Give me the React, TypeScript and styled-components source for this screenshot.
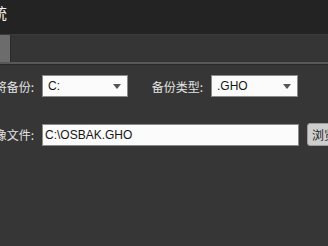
import React from 'react';
import styled, { createGlobalStyle } from 'styled-components';

const GlobalStyle = createGlobalStyle`
  html, body {
    margin: 0;
    padding: 0;
    background: #363636;
    overflow: hidden;
  }
  body {
    font-family: "Liberation Sans", "Noto Sans CJK SC", sans-serif;
  }
`;

const Window = styled.div`
  width: 420px;
  height: 246px;
  margin-left: -26px;
  display: flex;
  flex-direction: column;
  background: #363636;
`;

const TitleBar = styled.div`
  height: 34px;
  background: #232323;
  display: flex;
  align-items: flex-start;
  padding-top: 4px;
  box-sizing: border-box;
  overflow: hidden;
`;

const Title = styled.span`
  margin-left: 3px;
  font-family: "Noto Sans CJK SC", sans-serif;
  font-size: 15px;
  line-height: 18px;
  color: #f2f2f2;
`;

const TabBar = styled.div`
  height: 28px;
  background: #353535;
  border-top: 1px solid #3b3b3b;
  box-sizing: border-box;
  display: flex;
`;

const Tab = styled.div<{ $active?: boolean }>`
  width: 36px;
  background: ${p => (p.$active ? '#6c6c6c' : 'transparent')};
  border-right: 1px solid #2a2a2a;
`;

const TabLine = styled.div`
  height: 2px;
  background: #585858;
  border-bottom: 1px solid #2a2a2a;
`;

const Content = styled.div`
  flex: 1;
  display: flex;
  flex-direction: column;
  gap: 26px;
  padding-top: 10px;
  background: #363636;
`;

const Row = styled.div`
  display: flex;
  align-items: center;
  & > * {
    flex-shrink: 0;
  }
`;

const Label = styled.span<{ $width: number; $gap: number }>`
  width: ${p => p.$width}px;
  margin-right: ${p => p.$gap}px;
  display: flex;
  justify-content: flex-end;
  white-space: nowrap;
  overflow: hidden;
  font-family: "Noto Sans CJK SC", sans-serif;
  font-size: 12px;
  color: #e4e4e4;
`;

const Select = styled.div<{ $width: number }>`
  width: ${p => p.$width}px;
  height: 22px;
  box-sizing: border-box;
  background: #fbfbfb;
  border: 1px solid #8a8a8a;
  display: flex;
  align-items: center;
  justify-content: space-between;
  padding: 0 6px 0 5px;
  font-size: 12px;
  color: #161616;
`;

const Arrow = styled.span`
  width: 0;
  height: 0;
  border-left: 4px solid transparent;
  border-right: 4px solid transparent;
  border-top: 5px solid #555;
`;

const Spacer = styled.div<{ $width: number }>`
  width: ${p => p.$width}px;
`;

const TextInput = styled.input`
  width: 257px;
  height: 22px;
  box-sizing: border-box;
  background: #fbfbfb;
  border: 1px solid #8a8a8a;
  padding: 0 2px;
  font-family: "Liberation Sans", sans-serif;
  font-size: 12px;
  color: #161616;
  outline: none;
`;

const Button = styled.button`
  margin-left: 8px;
  width: 50px;
  height: 23px;
  background: #cdcdcd;
  border: 1px solid #9c9c9c;
  border-radius: 3px;
  padding: 0 0 0 4px;
  text-align: left;
  font-family: "Noto Sans CJK SC", sans-serif;
  font-size: 12px;
  color: #1a1a1a;
`;

export default function App() {
  return (
    <>
      <GlobalStyle />
      <Window>
        <TitleBar>
          <Title>系统</Title>
        </TitleBar>
        <TabBar>
          <Tab $active />
        </TabBar>
        <TabLine />
        <Content>
          <Row>
            <Label $width={60} $gap={8}>分区将备份:</Label>
            <Select $width={86}>
              <span>C:</span>
              <Arrow />
            </Select>
            <Spacer $width={19} />
            <Label $width={56} $gap={8}>备份类型:</Label>
            <Select $width={87}>
              <span>.GHO</span>
              <Arrow />
            </Select>
          </Row>
          <Row>
            <Label $width={60} $gap={8}>镜像文件:</Label>
            <TextInput value="C:\OSBAK.GHO" readOnly />
            <Button>浏览</Button>
          </Row>
        </Content>
      </Window>
    </>
  );
}
